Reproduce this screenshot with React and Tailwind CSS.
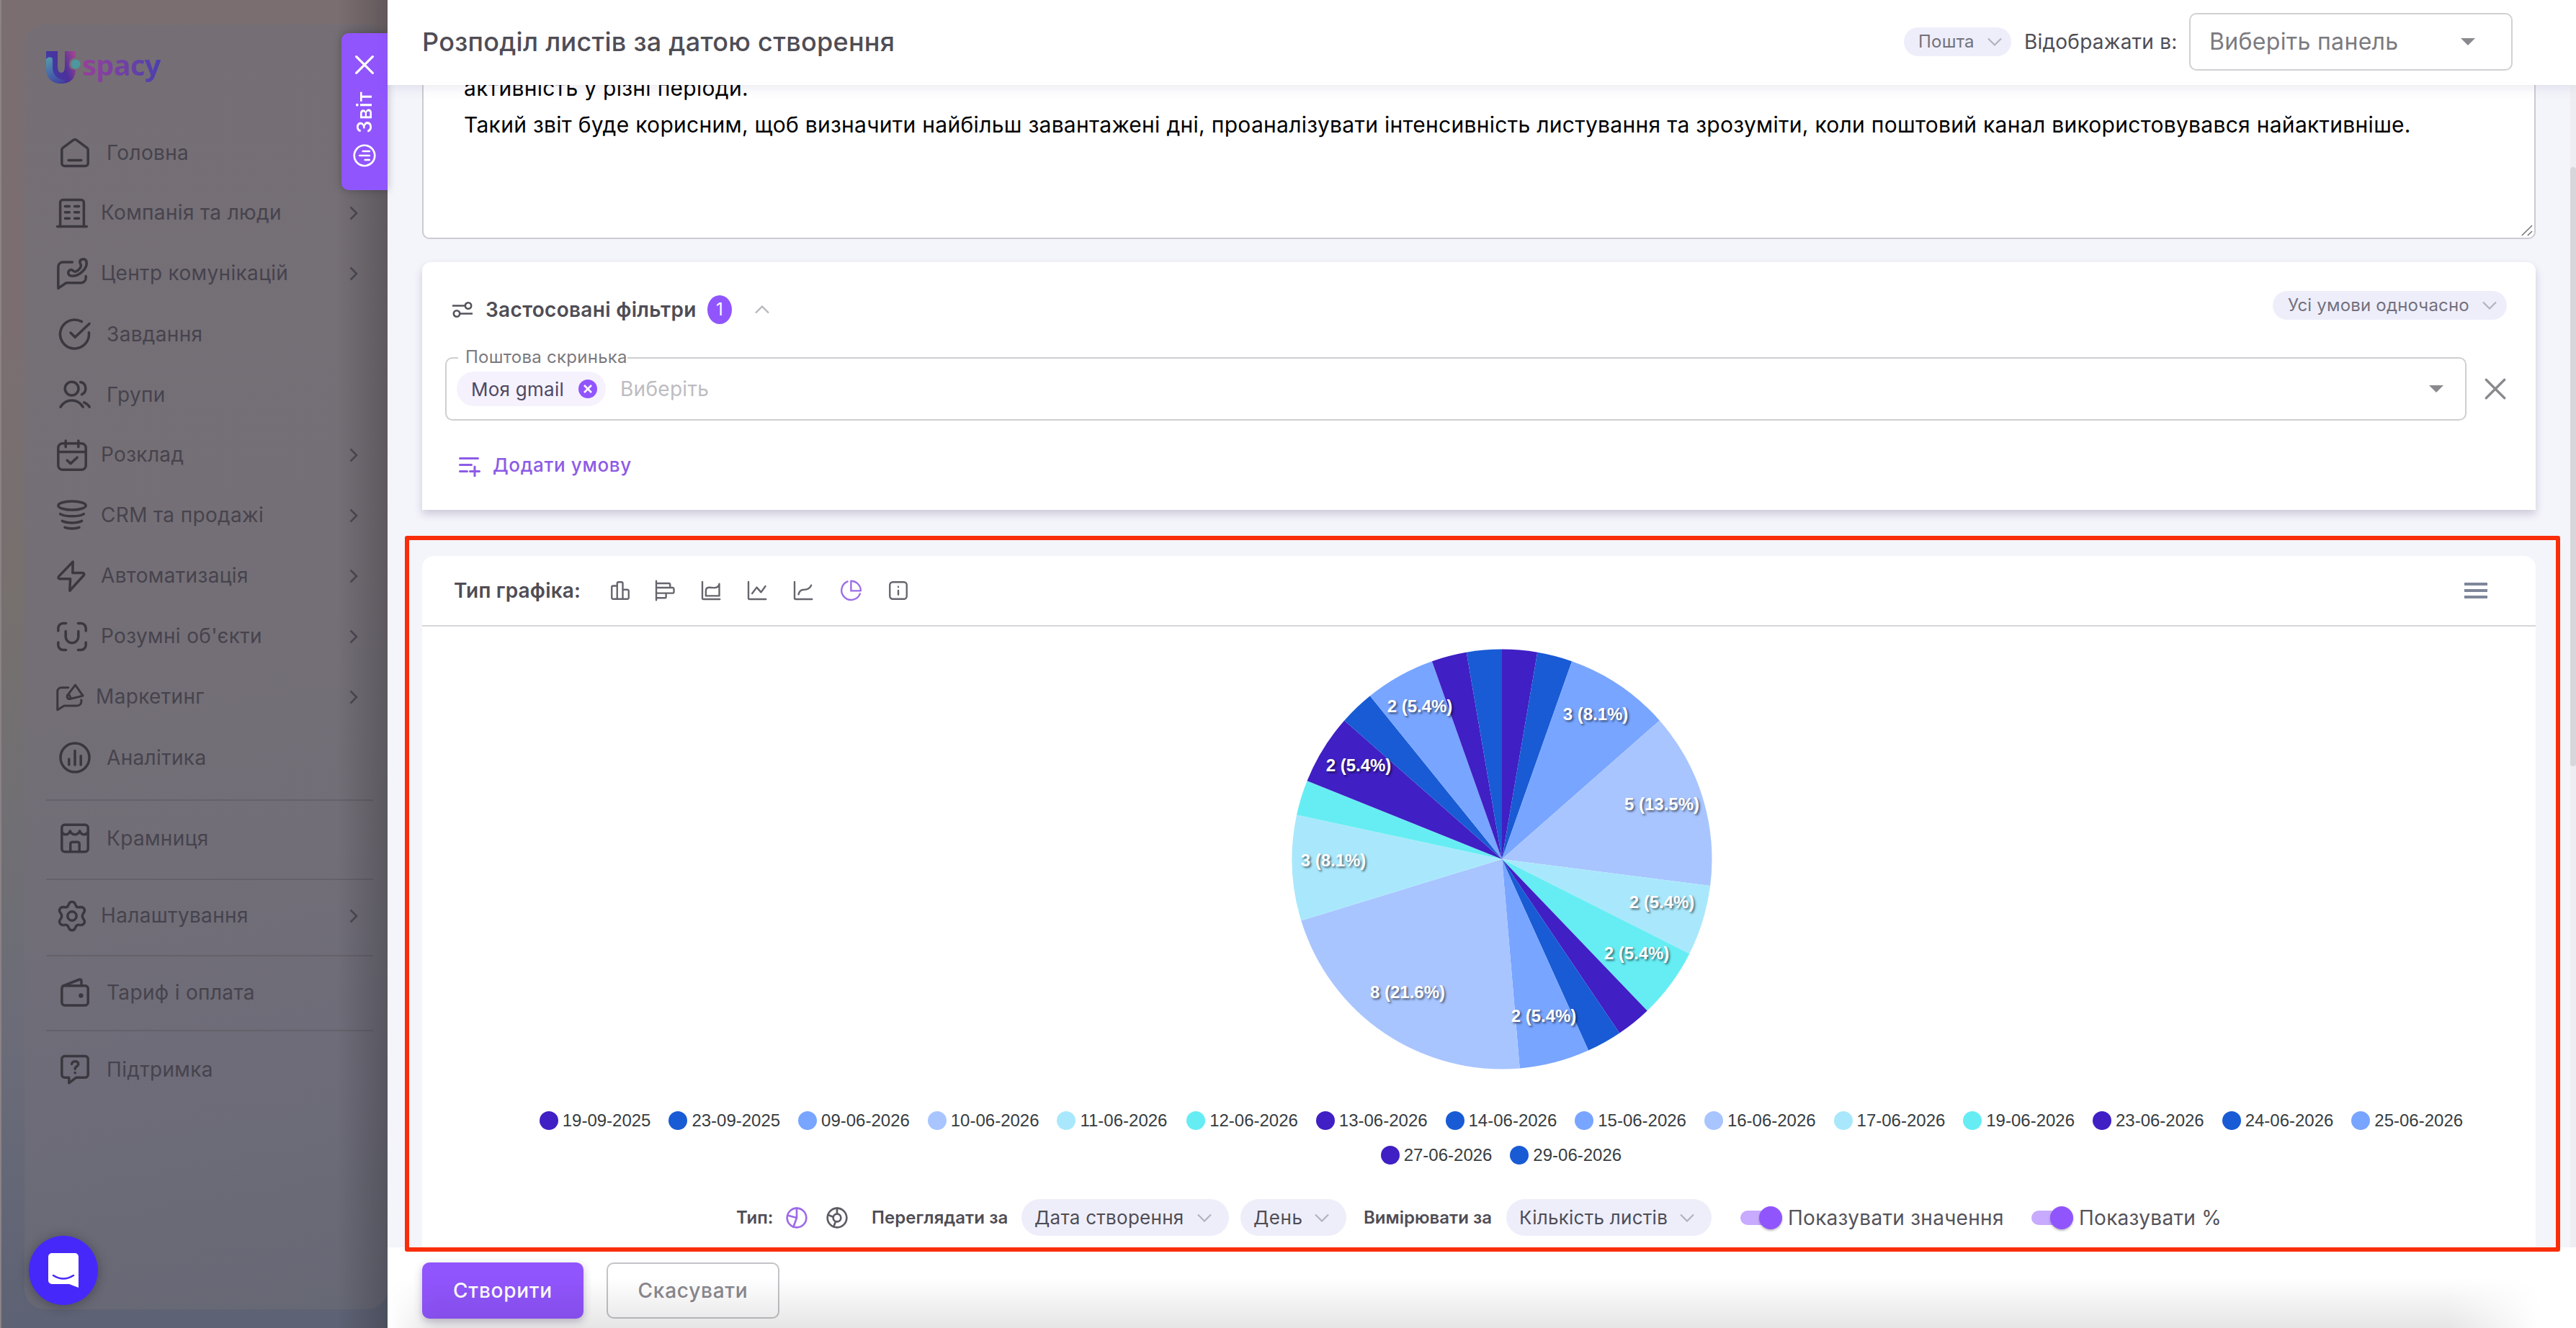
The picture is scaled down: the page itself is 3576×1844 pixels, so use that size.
import React from 'react';
import clsx from 'clsx';

const Icon = ({ className, strokeWidth = 1.7, children }) => (
  <svg
    viewBox="0 0 24 24"
    fill="none"
    stroke="currentColor"
    strokeWidth={strokeWidth}
    strokeLinecap="round"
    strokeLinejoin="round"
    className={clsx('shrink-0', className)}
    aria-hidden="true"
  >
    {children}
  </svg>
);

const HomeIcon = (
  <>
    <path d="M2.9 10.2a2 2 0 0 1 .8-1.6l7.1-5.3a2 2 0 0 1 2.4 0l7.1 5.3a2 2 0 0 1 .8 1.6v9.2a1.8 1.8 0 0 1-1.8 1.8H4.7a1.8 1.8 0 0 1-1.8-1.8z" />
    <path d="M7.6 17.2h8.8" />
  </>
);

const CompanyIcon = (
  <>
    <path d="M3.8 21.2V4.6A1.8 1.8 0 0 1 5.6 2.8h12.8a1.8 1.8 0 0 1 1.8 1.8v16.6" />
    <path d="M1.8 21.2h20.4M7.2 7.2h3M13.8 7.2h3M7.2 11.4h3M13.8 11.4h3M7.2 15.6h3M13.8 15.6h3" />
  </>
);

const CommunicationIcon = (
  <>
    <path d="M12.2 4H5.6a3.2 3.2 0 0 0-3.2 3.2v15L8 18.4h10.2a3.4 3.4 0 0 0 3.4-3.4v-1.2" />
    <path d="M17.5 4.4c-.5-2.4 3.2-3.6 4.4-1.2 1.4 4.6-4.6 10.8-10 10.4-3.4-.4-3.2-4-.6-4.3 1.3-.1 1.7 1.5 3 1.3 1.7-.6 3.4-2.3 3.9-3.9.2-.9-.5-1.4-.7-2.3z" />
  </>
);

const TaskIcon = (
  <>
    <path d="M21.7 10.9a10 10 0 1 1-5-7.6" />
    <path d="M9 11l3.1 3.1L22 4.7" />
  </>
);

const GroupIcon = (
  <>
    <circle cx="9.8" cy="7.8" r="4.7" />
    <path d="M2 20.5c3.8-6 11.8-6 15.6 0M15.8 3.3c4 .6 5.2 6.3 1 8.6M18.4 17.4c1.6.6 2.8 1.7 3.7 3.1" />
  </>
);

const CalendarIcon = (
  <>
    <rect x="2.4" y="3.9" width="19.2" height="18.2" rx="3" />
    <path d="M2.4 9.7h19.2M7.6 2v4.4M16.4 2v4.4M8.6 15.6l2.4 2.2 4.6-4.2" />
  </>
);

const FunnelIcon = (
  <>
    <ellipse cx="12" cy="5" rx="9.6" ry="3" />
    <path d="M3.8 10.8c3.2 2.1 13.2 2.1 16.4 0M5.2 15.7c3.2 1.7 10.4 1.7 13.6 0M7 20.2c2.8 1 7.2 1 10 0" />
  </>
);

const BoltIcon = <path d="M12.6 2L2.8 12.2a1 1 0 0 0 .7 1.7h7.3l-.4 8.2 9.8-10.7a1 1 0 0 0-.7-1.6h-7.1z" />;

const SmartIcon = (
  <>
    <path d="M2.4 8V6.2a3.4 3.4 0 0 1 3.4-3.4h2M16.2 2.8h2a3.4 3.4 0 0 1 3.4 3.4V8M21.6 16v1.8a3.4 3.4 0 0 1-3.4 3.4h-2M7.8 21.2h-2a3.4 3.4 0 0 1-3.4-3.4V16" />
    <path d="M7.6 8.2v3.8a4.4 4.4 0 0 0 8.8 0V8.2" />
  </>
);

const MarketingIcon = (
  <>
    <path d="M11 3.9H5.4a3.2 3.2 0 0 0-3.2 3.2v15L7.6 18.7h10.6a3.4 3.4 0 0 0 3.4-3.4v-1.2" />
    <path d="M16.7 1.8l6.2 8.8-10.5 2.6c-2.4.3-3.1-2.6-1.4-3.9zM11.4 9.2l1.8 3.8" />
  </>
);

const AnalyticsIcon = (
  <>
    <circle cx="12" cy="12" r="10" />
    <path d="M7.9 13v4M12 7.3V17M16.1 10.8V17" />
  </>
);

const ShopIcon = (
  <>
    <rect x="2.9" y="2.6" width="18.2" height="18.8" rx="2" />
    <path d="M2.9 7.7c1.4 2.4 4.6 2.3 5.8-.8 1.3 3.3 5.3 3.3 6.6 0 1.2 3.1 4.4 3.2 5.8.8M8.9 21.2v-5.4a1.2 1.2 0 0 1 1.2-1.2h3.8a1.2 1.2 0 0 1 1.2 1.2v5.4" />
  </>
);

const SettingsIcon = (
  <>
    <path d="M10 3.3c.8-1.5 3.2-1.5 4 0l.7 1.5c.4.8 1.2 1.2 2 1.1l1.7-.1c1.7 0 2.9 1.9 2 3.4l-.9 1.5c-.4.8-.4 1.8 0 2.6l.9 1.5c.9 1.5-.3 3.4-2 3.4l-1.7-.1c-.8-.1-1.6.3-2 1.1l-.7 1.5c-.8 1.5-3.2 1.5-4 0l-.7-1.5c-.4-.8-1.2-1.2-2-1.1l-1.7.1c-1.7 0-2.9-1.9-2-3.4l.9-1.5c.4-.8.4-1.8 0-2.6l-.9-1.5c-.9-1.5.3-3.4 2-3.4l1.7.1c.8.1 1.6-.3 2-1.1z" />
    <circle cx="12" cy="12" r="3.1" />
  </>
);

const WalletIcon = (
  <>
    <rect x="2.9" y="7.4" width="18.2" height="13.6" rx="2" />
    <path d="M3.5 7.6L15.2 3a1 1 0 0 1 1.3.9v3.3" />
    <circle cx="16.2" cy="14.2" r=".7" fill="currentColor" />
  </>
);

const SupportIcon = (
  <>
    <path d="M4.9 2.8h14.2a2 2 0 0 1 2 2v10.8a2 2 0 0 1-2 2h-6.2l-5 3.8v-3.8h-3a2 2 0 0 1-2-2V4.8a2 2 0 0 1 2-2z" />
    <path d="M9.8 8.2c.3-2.5 4.6-2.5 4.6.1 0 1.7-2.3 1.5-2.3 3.3M12.1 14.2v.2" />
  </>
);

const menu = [
  { label: 'Головна', icon: HomeIcon },
  { label: 'Компанія та люди', icon: CompanyIcon, sub: true },
  { label: 'Центр комунікацій', icon: CommunicationIcon, sub: true },
  { label: 'Завдання', icon: TaskIcon },
  { label: 'Групи', icon: GroupIcon },
  { label: 'Розклад', icon: CalendarIcon, sub: true },
  { label: 'CRM та продажі', icon: FunnelIcon, sub: true },
  { label: 'Автоматизація', icon: BoltIcon, sub: true },
  { label: "Розумні об'єкти", icon: SmartIcon, sub: true },
  { label: 'Маркетинг', icon: MarketingIcon, sub: true, small: true },
  { label: 'Аналітика', icon: AnalyticsIcon }
];

const bottomMenu = [
  { label: 'Крамниця', icon: ShopIcon, className: 'h-[108px] pb-1' },
  { label: 'Налаштування', icon: SettingsIcon, sub: true, className: 'h-[104px] pb-[5px]' },
  { label: 'Тариф і оплата', icon: WalletIcon, className: 'h-[102px] pb-0.5' },
  { label: 'Підтримка', icon: SupportIcon, className: 'h-[106px]' }
];

const colors = ['#401fc4', '#185bd4', '#78a5ff', '#a8c5ff', '#a9e8fc', '#66edf3'];

// label: [x, baseline y] of the slice caption inside the 584x584 chart
const slices = [
  { date: '19-09-2025', value: 1, color: colors[0] },
  { date: '23-09-2025', value: 1, color: colors[1] },
  { date: '09-06-2026', value: 3, color: colors[2], label: [422, 99] },
  { date: '10-06-2026', value: 5, color: colors[3], label: [514, 224] },
  { date: '11-06-2026', value: 2, color: colors[4], label: [514, 360] },
  { date: '12-06-2026', value: 2, color: colors[5], label: [479, 431] },
  { date: '13-06-2026', value: 1, color: colors[0] },
  { date: '14-06-2026', value: 1, color: colors[1] },
  { date: '15-06-2026', value: 2, color: colors[2], label: [350, 518] },
  { date: '16-06-2026', value: 8, color: colors[3], label: [161, 485] },
  { date: '17-06-2026', value: 3, color: colors[4], label: [58, 302] },
  { date: '19-06-2026', value: 1, color: colors[5] },
  { date: '23-06-2026', value: 2, color: colors[0], label: [93, 170] },
  { date: '24-06-2026', value: 1, color: colors[1] },
  { date: '25-06-2026', value: 2, color: colors[2], label: [178, 88] },
  { date: '27-06-2026', value: 1, color: colors[0] },
  { date: '29-06-2026', value: 1, color: colors[1] }
];

const total = slices.reduce((sum, s) => sum + s.value, 0);

const MenuItem = ({ item }) => (
  <div
    className={clsx(
      'flex items-center text-[#3a373f]',
      item.className || 'h-[84px]',
      item.sub ? 'pl-3' : 'pl-4'
    )}
  >
    <Icon className={item.small ? 'size-[41px]' : 'size-12'} strokeWidth={1.75}>
      {item.icon}
    </Icon>
    <span
      className={clsx(
        'flex-1 whitespace-nowrap text-[28px] leading-none tracking-[0.012em] text-[#46434d]',
        item.sub ? 'relative -top-px ml-[16px]' : 'ml-[20px]'
      )}
    >
      {item.label}
    </span>
    {item.sub && (
      <svg viewBox="0 0 12 20" fill="none" stroke="#4d4954" strokeWidth="2.6" className="mr-[21px] h-5 w-3" aria-hidden="true">
        <path d="M1.5 1.5l8.5 8.5-8.5 8.5" />
      </svg>
    )}
  </div>
);

const Logo = () => (
  <div className="flex h-[48px] items-start">
    <svg viewBox="0 0 50 48" className="h-12 w-[50px]" aria-hidden="true">
      <defs>
        <linearGradient id="logoU" gradientUnits="userSpaceOnUse" x1="2" y1="20" x2="40" y2="6">
          <stop offset="0" stopColor="#423da4" />
          <stop offset="0.5" stopColor="#4b309c" />
          <stop offset="1" stopColor="#a0458f" />
        </linearGradient>
        <linearGradient id="logoL" gradientUnits="userSpaceOnUse" x1="2" y1="10" x2="24" y2="46">
          <stop offset="0" stopColor="#559aab" />
          <stop offset="0.6" stopColor="#4560a8" />
          <stop offset="1" stopColor="#433f9e" />
        </linearGradient>
      </defs>
      <path d="M0 1h16v21q0 9 5 9t5-9V1h15v9q-9 1-9 9t9 8q-1 19-20 19T0 26z" fill="url(#logoU)" />
      <path d="M0 12q4-5 9-1v14q1 14 18 17-6 5-14 3Q0 40 0 26z" fill="url(#logoL)" />
      <circle cx="41" cy="19" r="6.5" fill="#4e979f" />
    </svg>
    <span className="-mt-[2px] bg-gradient-to-r from-[#96409a] via-[#7340a4] to-[#4a3fae] bg-clip-text pb-2 font-['Open_Sans',sans-serif] text-[40px] leading-[44px] font-bold tracking-[-0.02em] text-transparent">
      spacy
    </span>
  </div>
);

const Sidebar = () => (
  <aside className="relative w-[538px] shrink-0 border-l-2 border-[#8b8286] bg-[linear-gradient(180deg,#7b6e71_0%,#7a6e71_25%,#76706e_45%,#706f73_62%,#6b6c78_78%,#5d6274_100%)] pt-[34px] pl-8">
    <div className="h-[1784px] rounded-[28px] bg-[linear-gradient(170deg,#756f75_0%,#746f76_45%,#716e77_65%,#6c6b78_85%,#666874_100%)] pl-[30px] pt-[36px]">
      <Logo />
      <nav className="mt-[52px] w-[454px]">
        {menu.map((item) => (
          <MenuItem key={item.label} item={item} />
        ))}
        <div className="h-4" />
        {bottomMenu.map((item) => (
          <div key={item.label} className="border-t-2 border-[#65616a]">
            <MenuItem item={item} />
          </div>
        ))}
      </nav>
    </div>

    {/* Drawer shadow falling on the sidebar */}
    <div className="absolute inset-y-0 right-0 w-[70px] bg-gradient-to-r from-transparent to-black/20" />

    {/* Drawer tab */}
    <div className="absolute top-[46px] right-0 flex h-[218px] w-16 flex-col items-center rounded-l-[10px] bg-[#9155fd] text-white shadow-[0_0_12px_rgba(0,0,0,0.25)]">
      <Icon className="mt-[28px] size-8" strokeWidth={2.4}>
        <path d="M3.5 3.5l17 17M20.5 3.5l-17 17" />
      </Icon>
      <span className="mt-[19px] flex h-[60px] rotate-180 items-center text-[28px] leading-none font-medium tracking-[0.04em] [writing-mode:vertical-rl]">
        Звіт
      </span>
      <Icon className="mt-[13px] size-9 -rotate-90" strokeWidth={1.8}>
        <circle cx="12" cy="12" r="9.5" />
        <path d="M8 12.5v4M12 7.5v9M16 10.5v6" />
      </Icon>
    </div>

    {/* Messenger launcher */}
    <button className="absolute bottom-8 left-[38px] flex size-24 items-center justify-center rounded-full bg-[#4628fb] shadow-[0_2px_16px_rgba(0,0,0,0.3)]">
      <svg viewBox="0 0 42 48" className="h-12 w-[42px]" aria-hidden="true">
        <path d="M5 0h32a5 5 0 0 1 5 5v43l-13-5H5a5 5 0 0 1-5-5V5a5 5 0 0 1 5-5z" fill="#fff" />
        <path d="M7 31q14 9 28 0" fill="none" stroke="#4628fb" strokeWidth="2.6" strokeLinecap="round" />
      </svg>
    </button>
  </aside>
);

const Chevron = ({ className }) => (
  <svg viewBox="0 0 20 12" fill="none" stroke="currentColor" strokeWidth="2.2" className={clsx('h-3 w-5 shrink-0', className)} aria-hidden="true">
    <path d="M1 1.5l9 9 9-9" />
  </svg>
);

const Caret = ({ className }) => (
  <svg viewBox="0 0 20 10" className={clsx('h-2.5 w-5 fill-[#8a8a8e]', className)} aria-hidden="true">
    <path d="M0 0h20L10 10z" />
  </svg>
);

const Pill = ({ className, children }) => (
  <div className={clsx('flex items-center justify-between rounded-full bg-[#eeeefb] leading-none whitespace-nowrap', className)}>
    <span>{children}</span>
    <Chevron className="text-[#b3b2bd]" />
  </div>
);

const Header = () => (
  <header className="relative z-10 flex h-[118px] shrink-0 items-center bg-white pr-[88px] pb-[3px] pl-12 text-[#4f4d55] shadow-[0_4px_16px_rgba(80,80,140,0.12)]">
    <h1 className="text-[36px] leading-none font-medium tracking-[0.0075em]">Розподіл листів за датою створення</h1>
    <Pill className="ml-auto h-10 w-[149px] pr-[13px] pl-5 text-[24px] tracking-[0.01em] text-[#73717c]">Пошта</Pill>
    <span className="ml-[18px] w-[229px] text-[28px] leading-none tracking-[0.008em] whitespace-nowrap">Відображати в:</span>
    <div className="flex h-20 w-[449px] items-center justify-between rounded-[10px] border-2 border-[#d1d1d3] pr-[50px] pl-[26px] text-[32px] leading-none tracking-[0.01em] text-[#7b7a80]">
      Виберіть панель
      <Caret />
    </div>
  </header>
);

const Filters = () => (
  <section className="mt-8 flex h-[344px] shrink-0 flex-col rounded-t-xl bg-white pr-[38px] pl-8 shadow-[0_6px_12px_rgba(50,40,80,0.2)]">
    <div className="flex h-[132px] items-center pr-0.5 pl-2.5">
      <svg viewBox="0 0 28 22" fill="none" stroke="#55535b" strokeWidth="2.6" className="h-[22px] w-7" aria-hidden="true">
        <path d="M0 5.5h17M11 16.5h17" />
        <circle cx="22" cy="5.5" r="4.2" />
        <circle cx="6" cy="16.5" r="4.2" />
      </svg>
      <h2 className="ml-[18px] w-[308px] text-[28px] leading-none font-semibold tracking-[0.011em] whitespace-nowrap text-[#4f4d55]">
        Застосовані фільтри
      </h2>
      <span className="flex h-10 w-[34px] items-center justify-center rounded-[50%] bg-[#9155fd] text-[24px] leading-none text-white">1</span>
      <Chevron className="ml-8 rotate-180 text-[#b5b5ba]" />
      <Pill className="mb-3 ml-auto h-10 w-[325px] pr-[14px] pl-[21px] text-[24px] tracking-[0.008em] text-[#73717c]">Усі умови одночасно</Pill>
    </div>

    <div className="flex items-center">
      <div className="relative flex h-[88px] w-[2806px] shrink-0 items-center rounded-[10px] border-2 border-[#cfcfd1] pr-[30px] pl-3.5">
        <span className="absolute -top-[16px] left-4 bg-white pl-2.5 text-[24px] leading-[28px] tracking-[0.011em] text-[#7b7a80]">
          Поштова скринька
        </span>
        <div className="flex h-12 w-[207px] items-center justify-between rounded-full bg-[#f5f2fe] pr-3 pl-5 text-[26px] leading-none tracking-[0.01em] whitespace-nowrap text-[#4f4963]">
          <span className="mt-0.5">Моя gmail</span>
          <svg viewBox="0 0 26 26" className="size-[26px]" aria-hidden="true">
            <circle cx="13" cy="13" r="13" fill="#9155fd" />
            <path d="M8 8l10 10M18 8L8 18" stroke="#fff" strokeWidth="2.6" />
          </svg>
        </div>
        <span className="ml-5 flex-1 text-[28px] leading-none tracking-[0.01em] text-[#bdbcc1]">Виберіть</span>
        <Caret />
      </div>
      <Icon className="ml-[23px] size-[34px] text-[#8a8a8e]" strokeWidth={2.4}>
        <path d="M3 3l18 18M21 3L3 21" />
      </Icon>
    </div>

    <div className="flex h-[124px] items-center pl-[19px] text-[#8d5be6]">
      <svg viewBox="0 0 30 28" fill="none" stroke="currentColor" strokeWidth="3" strokeLinecap="round" className="mt-1 h-7 w-[30px]" aria-hidden="true">
        <path d="M1.5 2.5h25M1.5 11.5h16M1.5 20.5h10M15.5 20.5h13M22 14v13" />
      </svg>
      <span className="ml-[17px] text-[26px] leading-none font-medium tracking-[0.025em]">Додати умову</span>
    </div>
  </section>
);

const chartTypes = [
  {
    className: 'mr-[31.5px]',
    path: 'M8.6 21.4H4A1.4 1.4 0 0 1 2.6 20V8.2A1.4 1.4 0 0 1 4 6.8h4.6M8.6 21.4V4A1.4 1.4 0 0 1 10 2.6h3.4A1.4 1.4 0 0 1 14.8 4v17.4M14.8 11H20a1.4 1.4 0 0 1 1.4 1.4V20a1.4 1.4 0 0 1-1.4 1.4H8.6'
  },
  {
    className: 'mr-[34.5px]',
    path: 'M2.4 1.4v21.2M2.4 4h14a1.4 1.4 0 0 1 1.4 1.4v3.4M2.4 8.8h18.2A1.4 1.4 0 0 1 22 10.2v3.3a1.4 1.4 0 0 1-1.4 1.4H2.4M13.3 14.9v4a1.3 1.3 0 0 1-1.3 1.3H2.4'
  },
  {
    className: 'mr-[34px]',
    path: 'M2.4 2.3V20.4a1.2 1.2 0 0 0 1.2 1.2H21.8M6.3 17.9v-5.5c0-2.4 1.2-3.7 3.3-3.8 2.8-.1 4 .5 6.6.3 2.4-.2 4.6-1.5 5-4.3v13.3z'
  },
  { className: 'mr-[34px]', path: 'M2.4 2.3V20.4a1.2 1.2 0 0 0 1.2 1.2H21.8M6.5 15.2l5.1-6.7 4.8 5.4 4.8-6.7' },
  { className: 'mr-[35.5px]', path: 'M2.4 2.3V20.4a1.2 1.2 0 0 0 1.2 1.2H21.8M6.8 16.3c.8-3 2.2-4.8 4.5-5.1 1.5-.2 2.8 0 4.3-.5 2.4-.7 4.5-2.2 5.3-4.6' },
  { className: 'mr-[36.5px]', active: true, path: 'M8.5 1.9A10.6 10.6 0 1 0 22.3 15.5M12.3 1.4v10.9H23.1A10.9 10.9 0 0 0 12.3 1.4z' },
  { path: 'M5.8 2.6h12.4a3.2 3.2 0 0 1 3.2 3.2v12.4a3.2 3.2 0 0 1-3.2 3.2H5.8a3.2 3.2 0 0 1-3.2-3.2V5.8a3.2 3.2 0 0 1 3.2-3.2zM12 12v4.5M12 7.8v.1' }
];

const PieChart = () => {
  const c = 292;
  const r = 291.5;
  const point = (v) => {
    const a = (v / total) * Math.PI * 2;
    return `${c + r * Math.sin(a)} ${c - r * Math.cos(a)}`;
  };
  let start = 0;
  const paths = slices.map((s) => {
    const from = start;
    start += s.value;
    return <path key={s.date} d={`M${c} ${c}L${point(from)}A${r} ${r} 0 0 1 ${point(start)}Z`} fill={s.color} />;
  });

  return (
    <svg viewBox="0 0 584 584" className="size-[584px]" role="img" aria-label="Розподіл листів">
      {paths}
      <g className="fill-white font-['Liberation_Sans',Arial,sans-serif] text-[24px] font-bold [text-shadow:2px_2px_3px_rgba(0,0,0,0.55)]" textAnchor="middle">
        {slices.filter((s) => s.label).map((s) => (
          <text key={s.date} x={s.label[0]} y={s.label[1]}>
            {`${s.value} (${((s.value / total) * 100).toFixed(1)}%)`}
          </text>
        ))}
      </g>
    </svg>
  );
};

const Toggle = ({ label, className }) => (
  <div className={clsx('flex items-center text-[28px] leading-none tracking-[0.01em] whitespace-nowrap text-[#55535b]', className)}>
    <span className="flex h-5 w-[58px] shrink-0 items-center justify-end rounded-full bg-[#c8aafe]">
      <span className="size-8 rounded-full bg-[#9155fd] shadow-[0_2px_3px_rgba(0,0,0,0.25)]" />
    </span>
    <span className="ml-[8px]">{label}</span>
  </div>
);

const ChartControls = () => (
  <div className="mt-[37px] flex h-[51px] items-center pl-[436px] text-[24px] leading-none font-semibold whitespace-nowrap text-[#4f4d55]">
    <span className="w-[68px]">Тип:</span>
    <Icon className="size-[32px] text-[#9d6be8]" strokeWidth={2}>
      <circle cx="12" cy="12" r="10" />
      <path d="M12 2v10L8.5 21.5M12 12l-9-2.5" />
    </Icon>
    <Icon className="ml-[24px] size-[32px] text-[#5d5b63]" strokeWidth={2}>
      <circle cx="12" cy="12" r="10" />
      <circle cx="12" cy="12" r="4" />
      <path d="M12 2v6M8 11L2.8 9M10.5 16l-2 5" />
    </Icon>
    <span className="ml-[32px] w-[208px] tracking-[0.003em]">Переглядати за</span>
    <Pill className="h-[51px] w-[288px] pr-6 pl-[18px] text-[26px] font-normal tracking-[0.01em]">Дата створення</Pill>
    <Pill className="ml-4 h-[51px] w-[147px] pr-6 pl-[18px] text-[26px] font-normal tracking-[0.02em]">День</Pill>
    <span className="ml-[24px] w-[198px]">Вимірювати за</span>
    <Pill className="h-[51px] w-[285px] pr-6 pl-[18px] text-[26px] font-normal tracking-[0.01em]">Кількість листів</Pill>
    <Toggle label="Показувати значення" className="ml-[40px] w-[404px] font-normal" />
    <Toggle label="Показувати %" className="font-normal" />
  </div>
);

const Chart = () => (
  <section className="mt-16 h-[960px] shrink-0 rounded-t-2xl bg-white">
    <div className="flex h-[98px] items-center border-b-2 border-[#d5d6d9] pr-[67px] pl-11">
      <h2 className="w-[216px] text-[28px] leading-none font-semibold tracking-[0.006em] whitespace-nowrap text-[#4f4d55]">Тип графіка:</h2>
      {chartTypes.map((type, index) => (
        <Icon
          key={index}
          strokeWidth={1.9}
          className={clsx('size-[30px]', type.className, type.active ? 'text-[#9b6fe6]' : 'text-[#66646c]')}
        >
          <path d={type.path} />
        </Icon>
      ))}
      <div className="ml-auto flex w-8 flex-col gap-[5px]">
        <span className="h-[4px] bg-[#7e869a]" />
        <span className="h-[4px] bg-[#7e869a]" />
        <span className="h-[4px] bg-[#7e869a]" />
      </div>
    </div>

    <div className="flex flex-col items-center pt-[31px] pl-[63px]">
      <PieChart />
      <div className="mt-[47px] flex w-[2760px] flex-wrap justify-center gap-x-[24.7px] pr-px font-['Liberation_Sans',Arial,sans-serif] text-[24px] leading-[48px] text-[#373d3f]">
        {slices.map((s) => (
          <div key={s.date} className="flex w-[155px] items-center whitespace-nowrap">
            <span className="mr-1.5 size-[26px] shrink-0 rounded-full" style={{ backgroundColor: s.color }} />
            {s.date}
          </div>
        ))}
      </div>
    </div>
    <ChartControls />
  </section>
);

const Footer = () => (
  <footer className="relative flex h-[112px] shrink-0 gap-8 bg-white pt-[21px] pl-12 text-[28px] leading-none font-medium tracking-[0.026em]">
    <button className="h-[78px] w-[224px] rounded-[10px] bg-[#9155fd] text-white shadow-[0_4px_12px_rgba(60,40,100,0.3)]">Створити</button>
    <button className="h-[78px] w-60 rounded-[10px] border-2 border-[#c4c4c8] text-[#8a898f]">Скасувати</button>
    <div className="absolute inset-x-0 bottom-0 h-[70px] bg-gradient-to-b from-transparent to-black/10 [mask-image:linear-gradient(to_right,transparent,black_70px,black_2860px,transparent_2990px)]" />
  </footer>
);

export default function App() {
  return (
    <div className="relative flex h-[1844px] w-[3576px] overflow-hidden bg-black font-['Inter',sans-serif]">
      <Sidebar />
      <main className="flex min-w-0 flex-1 flex-col bg-[#f4f4fb]">
        <Header />
        <div className="flex h-[1614px] overflow-hidden">
          <div className="flex w-[2982px] flex-col pl-12">
            <div className="relative h-[214px] shrink-0 overflow-hidden rounded-b-[10px] border-2 border-t-0 border-[#cbcbd1] bg-white pl-[56px] text-[30px] leading-[50.5px] tracking-[0.0095em] text-black">
              <div className="-mt-[21px] whitespace-nowrap">
                <p>активність у різні періоди.</p>
                <p>
                  Такий звіт буде корисним, щоб визначити найбільш завантажені дні, проаналізувати інтенсивність листування та зрозуміти, коли поштовий канал використовувався найактивніше.
                </p>
              </div>
              <svg viewBox="0 0 18 18" stroke="#6f6f73" strokeWidth="1.6" className="absolute right-0.5 bottom-0.5 size-[16px]" aria-hidden="true">
                <path d="M1 17L17 1M10 17l7-7" />
              </svg>
            </div>
            <Filters />
            <Chart />
          </div>
          <div className="ml-auto w-2 bg-[#eeeef2]">
            <div className="mt-[114px] h-[832px] rounded-full bg-[#d7d7db]" />
          </div>
        </div>
        <Footer />
      </main>

      {/* Highlight frame around the chart section */}
      <div className="absolute top-[744px] left-[562px] z-20 h-[994px] w-[2992px] rounded-[3px] border-[6px] border-[#f92d09]" />
    </div>
  );
}
